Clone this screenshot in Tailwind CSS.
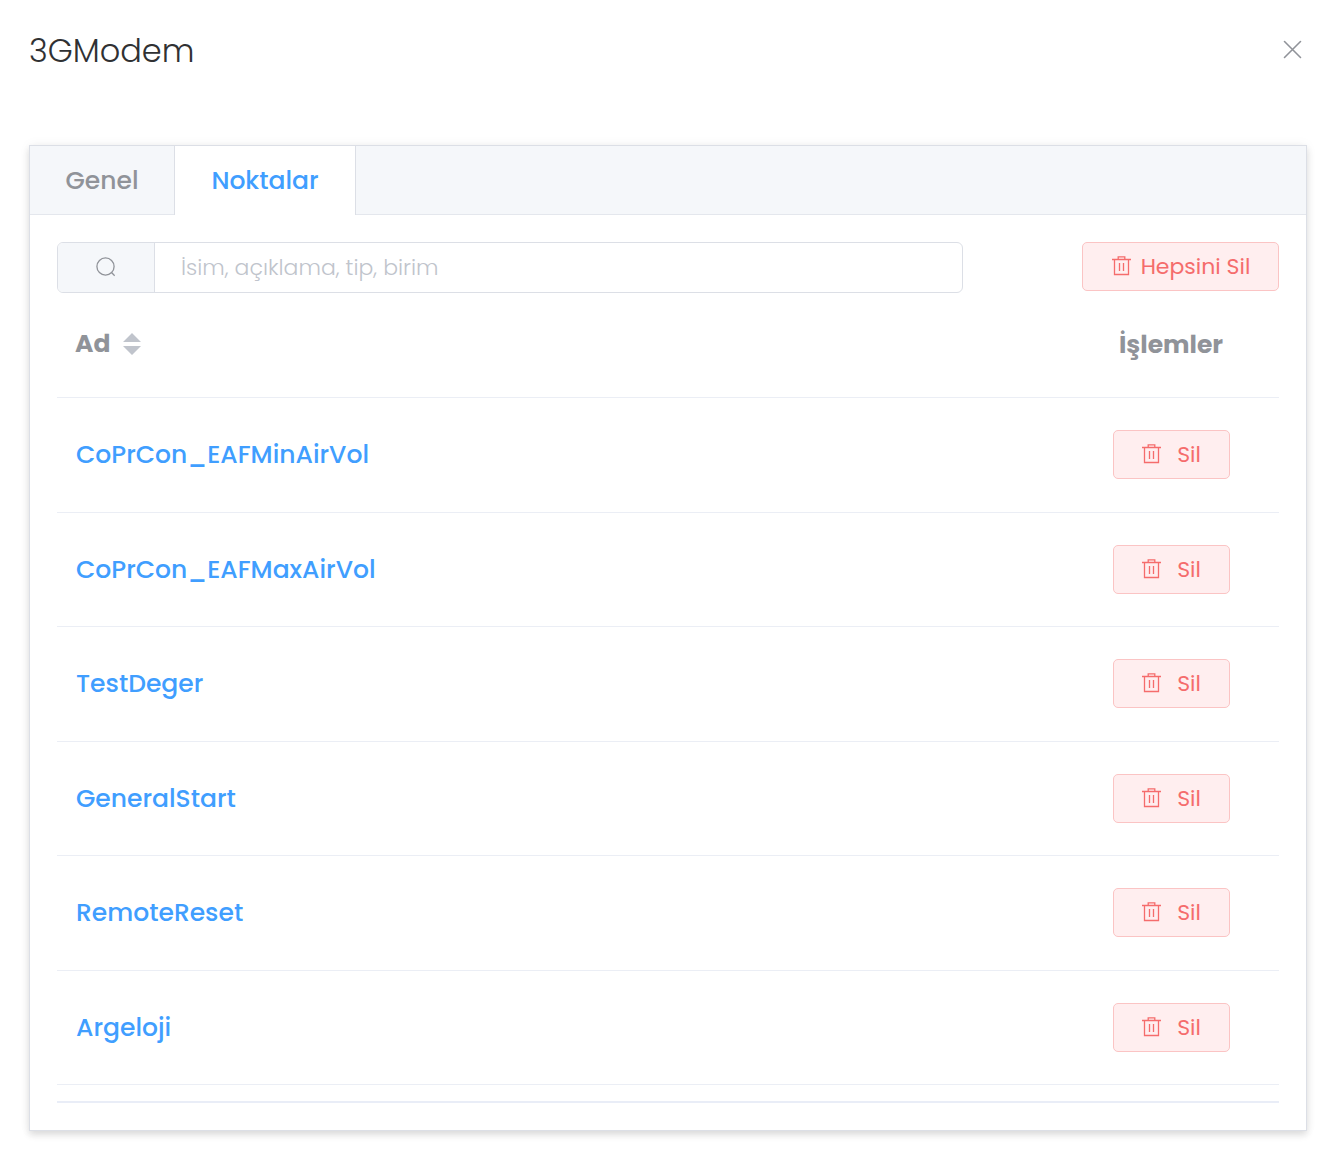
<!DOCTYPE html>
<html lang="tr">
  <head>
    <meta charset="UTF-8" />
    <meta name="viewport" content="width=device-width, initial-scale=1.0" />
    <title>3GModem</title>
    <script src="https://cdn.jsdelivr.net/npm/@tailwindcss/browser@4"></script>
  </head>
  <body class="bg-white font-[Poppins,Inter,sans-serif] text-[#303133]">
    <!-- Shared icons -->
    <svg class="hidden">
      <symbol id="trash" viewBox="0 0 20 21">
        <path
          d="M1 3.5H20M3.5 3.5V18.5H17.5V3.5M7.2 3.5V0.9H13.8V3.5M8.5 7V15M12.5 7V15"
          fill="none"
          stroke="currentColor"
          stroke-width="1.3"
        />
      </symbol>
    </svg>

    <header class="flex items-center justify-between pt-[26px] pr-[37px] pl-[29px]">
      <h1 class="text-[32px] leading-[50px] font-light">3GModem</h1>
      <button type="button" aria-label="Kapat" class="text-[#909399]">
        <svg class="h-[22px] w-5" viewBox="0 0 20 22" fill="none" stroke="currentColor" stroke-width="1.6" stroke-linecap="round">
          <path d="M1.5 1.5l16 16M17.5 1.5l-16 16" />
        </svg>
      </button>
    </header>

    <main
      class="mt-[69px] mr-[33px] mb-[43px] ml-[29px] border border-[#dcdfe6] shadow-[0_4px_7px_rgba(0,0,0,0.12),0_0_11px_rgba(0,0,0,0.05)]"
    >
      <!-- Tabs -->
      <div role="tablist" class="flex h-[69px] border-b border-[#e4e7ed] bg-[#f5f7fa] text-[25px] font-medium">
        <button type="button" role="tab" aria-selected="false" class="-mb-px w-[144px] border-b border-[#e4e7ed] pt-px text-[#909399]">Genel</button>
        <button
          type="button"
          role="tab"
          aria-selected="true"
          class="-mb-px w-[182px] border-x border-[#dcdfe6] bg-white text-[#409eff]"
        >
          Noktalar
        </button>
      </div>

      <div class="p-[27px]">
        <div class="flex items-start justify-between gap-[119px]">
          <div class="flex h-[51px] min-w-0 flex-1 overflow-hidden rounded-md border border-[#dcdfe6]">
            <label
              for="search"
              aria-label="Ara"
              class="flex w-[97px] shrink-0 items-center justify-center border-r border-[#dcdfe6] bg-[#f5f7fa] text-[#909399]"
            >
              <svg class="h-[21px] w-5" viewBox="0 0 20 21" fill="none" stroke="currentColor" stroke-width="1.3">
                <circle cx="9.5" cy="9.5" r="8.6" />
                <path d="M15.5 15.5l3.2 3.2" />
              </svg>
            </label>
            <input
              id="search"
              type="text"
              placeholder="İsim, açıklama, tip, birim"
              class="min-w-0 flex-1 px-[26px] text-[22px] font-light outline-none placeholder:text-[#c0c4cc]"
            />
          </div>
          <button
            type="button"
            class="flex h-[49px] w-[197px] items-center justify-center gap-[10px] rounded-[5px] border border-[#fbc4c4] bg-[#ffeeef] text-[22px] text-[#f56c6c]"
          >
            <svg class="h-[21px] w-5"><use href="#trash" /></svg>
            Hepsini Sil
          </button>
        </div>

        <table class="w-full table-fixed">
          <thead>
            <tr class="h-[104px] border-b border-[#ebeef5] text-[25px] text-[#909399]">
              <th class="pb-0.5 pl-[18px] text-left font-bold">
                <button type="button" class="flex items-center gap-[13px]">
                  Ad
                  <svg class="h-[22px] w-[18px]" viewBox="0 0 18 22" fill="#c0c4cc">
                    <path d="M0 9L9 0l9 9zM0 13h18l-9 9z" />
                  </svg>
                </button>
              </th>
              <th class="w-[216px] font-bold">İşlemler</th>
            </tr>
          </thead>
          <tbody id="points"></tbody>
        </table>
        <div class="mt-4 h-[2px] bg-[#e9edf7]"></div>
      </div>
    </main>

    <script>
      const points = [
        "CoPrCon_EAFMinAirVol",
        "CoPrCon_EAFMaxAirVol",
        "TestDeger",
        "GeneralStart",
        "RemoteReset",
        "Argeloji",
      ];

      document.getElementById("points").innerHTML = points
        .map(
          (name) => `
            <tr class="border-b border-[#ebeef5] odd:h-[115px] even:h-[114px]">
              <td class="pt-px pl-[19px] text-[25px] font-medium text-[#409eff]">
                <a href="#">${name}</a>
              </td>
              <td>
                <button
                  type="button"
                  class="mx-auto flex h-[49px] w-[117px] items-center justify-center gap-4 rounded-[5px] border border-[#fbc4c4] bg-[#ffeeef] text-[22px] text-[#f56c6c]"
                >
                  <svg class="h-[21px] w-5"><use href="#trash" /></svg>
                  Sil
                </button>
              </td>
            </tr>`
        )
        .join("");
    </script>
  </body>
</html>
